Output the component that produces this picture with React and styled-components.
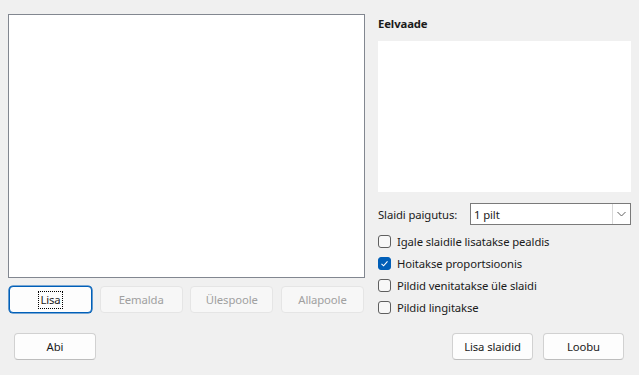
import React from "react";
import styled, { createGlobalStyle } from "styled-components";

const GlobalStyle = createGlobalStyle`
  html, body {
    margin: 0;
    padding: 0;
    background: #f0f0f0;
  }
  body {
    font-family: "Noto Sans", "Open Sans", sans-serif;
    font-size: 11.3px;
    letter-spacing: -0.1px;
    color: #1b1b1b;
  }
`;

const Dialog = styled.div`
  width: 639px;
  height: 375px;
  box-sizing: border-box;
  background: #f0f0f0;
  display: flex;
  flex-direction: column;
  padding: 14px 8px 0 8px;
`;

const Main = styled.div`
  display: flex;
  align-items: flex-start;
  gap: 13px;
`;

const LeftColumn = styled.div`
  width: 357px;
  display: flex;
  flex-direction: column;
  gap: 8px;
`;

const ListBox = styled.div`
  height: 264px;
  box-sizing: border-box;
  background: #ffffff;
  border: 1px solid #828790;
`;

const ButtonRow = styled.div`
  display: grid;
  grid-template-columns: repeat(4, 83px);
  justify-content: space-between;
  padding: 0 1px;
`;

const Button = styled.button`
  height: 27px;
  width: ${(p) => p.$width || 83}px;
  box-sizing: border-box;
  padding: 0;
  font-family: inherit;
  font-size: inherit;
  letter-spacing: inherit;
  border-radius: 4px;
  border: 1px solid ${(p) => (p.$focused ? "#005fb8" : p.disabled ? "#e5e5e5" : "#d1d1d1")};
  border-bottom-color: ${(p) => (p.$focused ? "#005fb8" : p.disabled ? "#e5e5e5" : "#bdbdbd")};
  background: ${(p) => (p.disabled ? "#f7f7f7" : "#fdfdfd")};
  color: ${(p) => (p.disabled ? "#a0a0a0" : "#1b1b1b")};
  box-shadow: ${(p) => (p.$focused ? "0 0 0 0.6px #005fb8" : "none")};
  display: flex;
  align-items: center;
  justify-content: center;
`;

const FocusText = styled.span`
  outline: 1px dotted #000;
  outline-offset: 0;
  padding: 1px 1px 2px;
  line-height: 13px;
`;

const RightColumn = styled.div`
  width: 253px;
  display: flex;
  flex-direction: column;
`;

const Heading = styled.div`
  font-weight: 700;
  height: 27px;
  padding-top: 2px;
  box-sizing: border-box;
`;

const Preview = styled.div`
  height: 151px;
  background: #ffffff;
`;

const LayoutRow = styled.div`
  margin-top: 11px;
  display: flex;
  align-items: center;
  justify-content: space-between;
`;

const Combo = styled.div`
  width: 161px;
  height: 22px;
  box-sizing: border-box;
  border: 1px solid #7a7a7a;
  background: #ffffff;
  display: flex;
  align-items: stretch;
`;

const ComboValue = styled.div`
  flex: 1;
  padding-left: 3px;
  display: flex;
  align-items: center;
`;

const ComboArrow = styled.div`
  width: 17px;
  border-left: 1px solid #d9d9d9;
  display: flex;
  align-items: center;
  justify-content: center;
`;

const Options = styled.div`
  margin-top: 5px;
  display: flex;
  flex-direction: column;
`;

const CheckRow = styled.label`
  height: 22px;
  display: flex;
  align-items: center;
  gap: 6px;
`;

const Box = styled.span`
  width: 13px;
  height: 13px;
  box-sizing: border-box;
  border-radius: 3px;
  border: 1px solid ${(p) => (p.$checked ? "#005fb8" : "#5f5f5f")};
  background: ${(p) => (p.$checked ? "#005fb8" : "#f7f7f7")};
  display: flex;
  align-items: center;
  justify-content: center;
`;

const Footer = styled.div`
  margin-top: 15px;
  padding: 0 7px 0 6px;
  display: flex;
  align-items: center;
`;

const Spacer = styled.div`
  flex: 1;
`;

const FooterGap = styled.div`
  width: 10px;
`;

function Checkbox({ checked, children }) {
  return (
    <CheckRow>
      <Box $checked={checked}>
        {checked && (
          <svg width="9" height="9" viewBox="0 0 9 9">
            <path d="M1.5 4.8 L3.6 6.8 L7.5 2.4" fill="none" stroke="#fff" strokeWidth="1.1" />
          </svg>
        )}
      </Box>
      {children}
    </CheckRow>
  );
}

export default function App() {
  return (
    <>
      <GlobalStyle />
      <Dialog>
        <Main>
          <LeftColumn>
            <ListBox />
            <ButtonRow>
              <Button $focused>
                <FocusText>Lisa</FocusText>
              </Button>
              <Button disabled>Eemalda</Button>
              <Button disabled>Ülespoole</Button>
              <Button disabled>Allapoole</Button>
            </ButtonRow>
          </LeftColumn>
          <RightColumn>
            <Heading>Eelvaade</Heading>
            <Preview />
            <LayoutRow>
              <span>Slaidi paigutus:</span>
              <Combo>
                <ComboValue>1 pilt</ComboValue>
                <ComboArrow>
                  <svg width="9" height="6" viewBox="0 0 9 6">
                    <path d="M0.5 1 L4.5 5 L8.5 1" fill="none" stroke="#606060" strokeWidth="1" />
                  </svg>
                </ComboArrow>
              </Combo>
            </LayoutRow>
            <Options>
              <Checkbox>Igale slaidile lisatakse pealdis</Checkbox>
              <Checkbox checked>Hoitakse proportsioonis</Checkbox>
              <Checkbox>Pildid venitatakse üle slaidi</Checkbox>
              <Checkbox>Pildid lingitakse</Checkbox>
            </Options>
          </RightColumn>
        </Main>
        <Footer>
          <Button $width={82}>Abi</Button>
          <Spacer />
          <Button $width={81}>Lisa slaidid</Button>
          <FooterGap />
          <Button $width={81}>Loobu</Button>
        </Footer>
      </Dialog>
    </>
  );
}
